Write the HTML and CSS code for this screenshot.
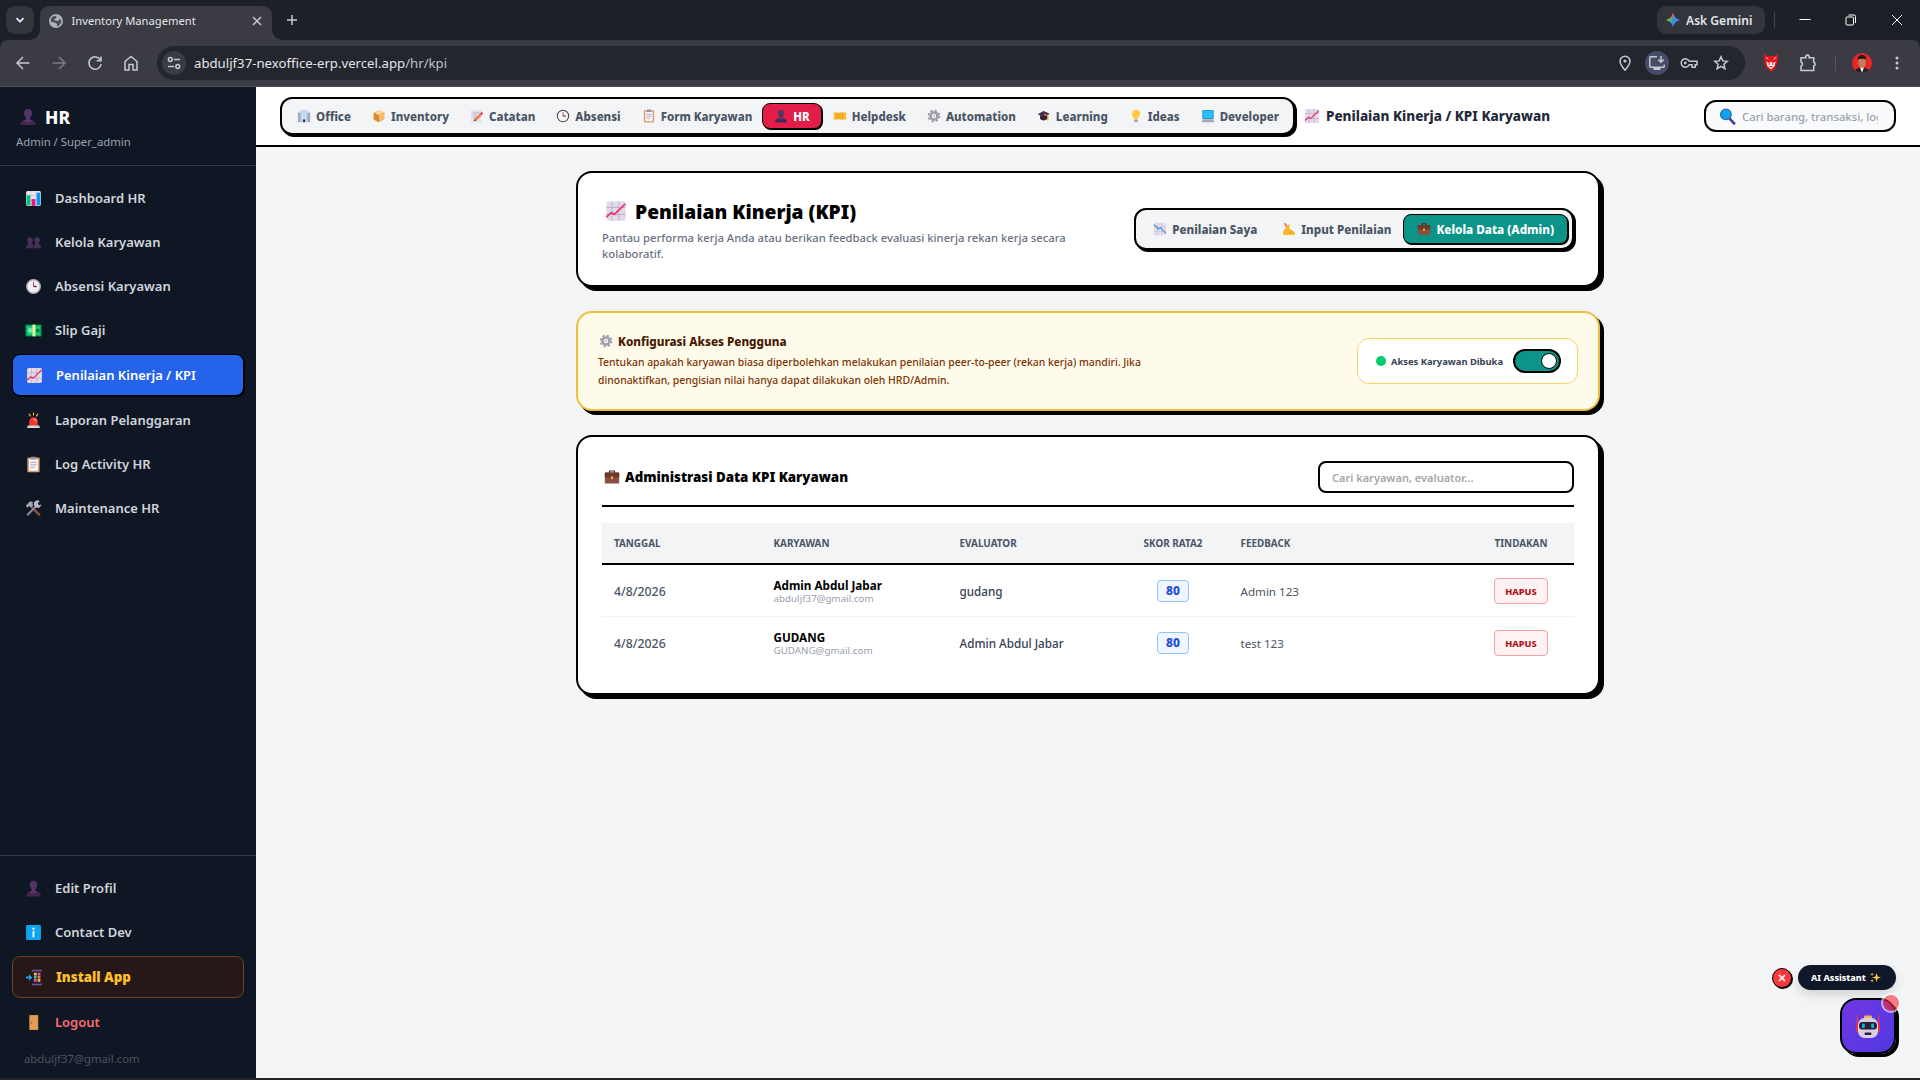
FILE: index.html
```
<!DOCTYPE html>
<html lang="id">
<head>
    <meta charset="UTF-8">
    <meta name="viewport" content="width=device-width, initial-scale=1.0">
    <title>Inventory Management</title>
    <link rel="stylesheet" href="styles.css">
</head>
<body>
    <!-- Icon sprite -->
    <svg class="sprite" aria-hidden="true">
        <symbol id="person" viewBox="0 0 16 16"><path d="M8 .8c2.3 0 3.7 1.7 3.5 4-.1 1.700-.8 3-1.700 3.800v1.600c2.600.8 4.700 2 4.900 5H1.300c.2-3 2.300-4.200 4.900-5V8.600C5.300 7.800 4.600 6.500 4.500 4.800 4.300 2.500 5.700.8 8 .8z" fill="#533566"/><path d="M1.300 15.200c.1-1.700.9-2.900 2.300-3.700L8 13l4.400-1.500c1.400.8 2.200 2 2.300 3.700z" fill="#43254f"/></symbol>
        <symbol id="people" viewBox="0 0 16 16"><path d="M4.700 3c1.700 0 2.600 1.100 2.600 2.800 0 1.200-.4 2.100-1 2.700v.8l1.700.7 1.700-.7v-.8c-.6-.6-1-1.500-1-2.700C8.700 4.100 9.600 3 11.300 3S14 4.100 14 5.800c0 1.200-.5 2.100-1.100 2.700v.8c1.200.6 2.100 1.500 2.100 4.200H1c0-2.700.9-3.600 2.100-4.200v-.8C2.500 7.900 2 7 2 5.800 2 4.100 3 3 4.700 3z" fill="#44305a"/><path d="M8 10v3.500" stroke="#241a35"/></symbol>
        <symbol id="bars" viewBox="0 0 16 16"><rect x="1" y="1" width="14" height="14" rx="1.500" fill="#e9e4ee"/><path d="M5.500 1v14M10.500 1v14M1 5h14M1 10h14" stroke="#c9c0d4" stroke-width=".6"/><rect x="1.500" y="5" width="3.600" height="9.500" fill="#00c37a"/><rect x="6.200" y="8.500" width="3.600" height="6.500" fill="#e6198c"/><rect x="10.900" y="2.500" width="3.600" height="12" fill="#0d9be8"/></symbol>
        <symbol id="up" viewBox="0 0 16 16"><rect x="1" y="1" width="14" height="14" rx="1.500" fill="#e2d9ea"/><path d="M5 1v14M10 1v14M1 5.500h14M1 10.500h14" stroke="#b9aac7" stroke-width=".6"/><path d="M1 12.500 4.500 9.200l2.200 1.300L14.800 2.800" fill="none" stroke="#e8386c" stroke-width="1.300"/></symbol>
        <symbol id="down" viewBox="0 0 16 16"><rect x="1" y="1" width="14" height="14" rx="1.500" fill="#e2dcec"/><path d="M5 1v14M10 1v14M1 5.500h14M1 10.500h14" stroke="#bdb2cc" stroke-width=".6"/><path d="M1 3l5 5 2.500-1.500 6.300 6.500" fill="none" stroke="#3d8fdb" stroke-width="1.300"/></symbol>
        <symbol id="clock" viewBox="0 0 16 16"><circle cx="8" cy="8" r="6.300" fill="#f4f1f5" stroke="#b5adb9" stroke-width="1.400"/><path d="M8 3.500V8" stroke="#d3365f" stroke-width="1"/><path d="M8 8h3" stroke="#3b2f40" stroke-width="1.300"/></symbol>
        <symbol id="clock2" viewBox="0 0 16 16"><circle cx="8" cy="8" r="6.500" fill="#f6f4f7" stroke="#4b4650" stroke-width="1.200"/><path d="M8 3.500V8" stroke="#c14260" stroke-width="1"/><path d="M8 8h3.200" stroke="#3b2f40" stroke-width="1.200"/></symbol>
        <symbol id="money" viewBox="0 0 16 16"><rect x=".5" y="2.500" width="15" height="11" fill="#00a352"/><rect x="1.800" y="3.800" width="12.400" height="8.400" fill="#19c979"/><circle cx="5" cy="8" r="2.300" fill="#7aeab4"/><circle cx="12" cy="8" r="2" fill="#087d45"/><rect x="7" y="2.500" width="2.800" height="11" fill="#e9f29a"/></symbol>
        <symbol id="siren" viewBox="0 0 16 16"><path d="M8 .5v2.700M3.800 1.600l1.500 2.500M12.200 1.600l-1.500 2.500" stroke="#ffc933" stroke-width="1"/><path d="M4 13V9a4 4 0 0 1 8 0v4z" fill="#f5372f"/><path d="M8 6.500a2.500 2.500 0 0 1 2.500 2.500" stroke="#ff9d93" fill="none"/><path d="M2 15l.6-2.300h10.800L14 15z" fill="#d9d5df"/></symbol>
        <symbol id="clip" viewBox="0 0 16 16"><rect x="2.200" y="1.300" width="11.600" height="14" rx="1" fill="#d99a66"/><rect x="3.700" y="3" width="8.600" height="11" fill="#f7f4fb"/><rect x="5.500" y=".7" width="5" height="2.600" rx=".6" fill="#9a93a6"/><path d="M5 6h6M5 8.300h6M5 10.600h4" stroke="#a79fbd" stroke-width=".9"/></symbol>
        <symbol id="tools" viewBox="0 0 16 16"><path d="M14 14.500 6.200 6.700" stroke="#8b5340" stroke-width="2.200"/><path d="M.8 5.300 4.800 1.200l3 1-1 1.300 1 1.500-2.200 2.200-1.800-1.500-1.500 1.500z" fill="#a9a4b2"/><path d="M2 14.300 10.800 5.500" stroke="#8d8797" stroke-width="2"/><path d="M13.700.9a3.500 3.500 0 1 0 1.600 3.300l-2 .7-1.300-1.300z" fill="#bdb8c7"/></symbol>
        <symbol id="info" viewBox="0 0 16 16"><rect x="1" y="1" width="14" height="14" rx="1.200" fill="#0da4f0"/><circle cx="8" cy="4.400" r="1.100" fill="#fff"/><path d="M8 6.500v6" stroke="#fff" stroke-width="1.700"/></symbol>
        <symbol id="install" viewBox="0 0 16 16"><path d="M5.500 2.300V.8H15v1.500zM5.500 15.200v-1.500H15v1.500z" fill="#6d589b"/><rect x="6.500" y="2.300" width="7.500" height="11.400" fill="#2b2140"/><path d="M0 7h2.800V5L6 8 2.800 11V9H0z" fill="#1aa4ec"/><path d="M7.500 3.500H10V6H7.500zM11 9.500h2.500V12H11z" fill="#f5b83d"/><path d="M11 3.500h2.500V6H11zM7.500 9.500H10V12H7.500z" fill="#e9559c"/><path d="M7.500 6.500H10V9H7.500z" fill="#44c98e"/><path d="M11 6.500h2.500V9H11z" fill="#f27f3d"/></symbol>
        <symbol id="door" viewBox="0 0 16 16"><rect x="4" y="1" width="8.500" height="14" rx=".6" fill="#d98d49"/><rect x="5" y="2" width="6.500" height="12" fill="#e29c58"/><circle cx="6.300" cy="8.300" r=".7" fill="#8a4f24"/></symbol>
        <symbol id="office" viewBox="0 0 16 16"><rect x="1" y="4" width="14" height="11" fill="#a3a9b5"/><rect x="4" y="1" width="8" height="14" fill="#b9d5ef"/><path d="M6.500 1v11M9.500 1v11" stroke="#dbe9f6" stroke-width=".8"/><rect x="7" y="12" width="2.200" height="3" fill="#2e2a35"/></symbol>
        <symbol id="box" viewBox="0 0 16 16"><path d="M2 4.200 8.500 1.500 14 4v7.500L8 15l-6-3z" fill="#f0a648"/><path d="M8 7l6-3v7.500L8 15z" fill="#f7bb68"/><path d="M2 4.200 8.500 1.500 14 4 8 7z" fill="#fbc878"/><path d="M2 4.200 8 7v8l-6-3z" fill="#d98a35"/><path d="M4.800 5.500 11 2.700" stroke="#fff0c9" stroke-width="1.300"/></symbol>
        <symbol id="memo" viewBox="0 0 16 16"><rect x="1" y="1" width="12" height="14" rx=".8" fill="#e6e2ee"/><path d="M3 4.500h8M3 7h5M3 9.500h4" stroke="#b5aec6" stroke-width=".9"/><path d="M6.300 12.300 13 5.600" stroke="#f2803d" stroke-width="3"/><path d="M4.300 14l1-3 2 2z" fill="#4b4655"/><path d="M12.400 4.200 14.200 6" stroke="#e13f6e" stroke-width="2.600"/></symbol>
        <symbol id="ticket" viewBox="0 0 16 16"><path d="M.7 4h14.600v2.700a1.500 1.500 0 0 0 0 2.600V12H.7V9.300a1.500 1.500 0 0 0 0-2.600z" fill="#fdb92e"/><path d="M10.500 4v8" stroke="#df7c1a" stroke-dasharray="1.300 1"/><path d="M3 6.500h5.500M3 9.200h5.500" stroke="#e88d1d"/></symbol>
        <symbol id="gear" viewBox="0 0 16 16"><circle cx="8" cy="8" r="4" fill="none" stroke="#a29cab" stroke-width="3"/><circle cx="8" cy="8" r="6.200" fill="none" stroke="#a29cab" stroke-width="2.200" stroke-dasharray="2.600 2.270"/><circle cx="8" cy="8" r="1.300" fill="#c9c4d0"/></symbol>
        <symbol id="cap" viewBox="0 0 16 16"><path d="M3.500 7v4.500c2.500 2 6 2 8 0V7z" fill="#34233f"/><path d="M.8 6 7.500 2.200l7.200 3.300-6.700 4z" fill="#43304f"/><path d="M8 6 12.300 7.500v5.500" stroke="#f0923d" stroke-width="1.400" fill="none"/></symbol>
        <symbol id="bulb" viewBox="0 0 16 16"><path d="M8 .8a4.700 4.700 0 0 1 4.700 4.700c0 2.500-2 3.400-2.400 5.700H5.700C5.300 8.900 3.300 8 3.300 5.500A4.700 4.700 0 0 1 8 .8z" fill="#ffc83d"/><path d="M6.700 3a2.500 2.500 0 0 0-1.500 2.500" stroke="#fff0b8" fill="none"/><rect x="6" y="11.600" width="4" height="3.400" rx="1" fill="#a9a3b0"/></symbol>
        <symbol id="laptop" viewBox="0 0 16 16"><rect x="1.500" y="1" width="13" height="10.500" rx=".8" fill="#2390c9"/><rect x="2.500" y="2" width="11" height="8.500" fill="#29c0fb"/><path d="M.8 15l1-3.200h12.400l1 3.200z" fill="#aaa4b5"/></symbol>
        <symbol id="mag" viewBox="0 0 16 16"><path d="m9.500 9.500 4.700 5" stroke="#4b3f92" stroke-width="2.600" stroke-linecap="round"/><circle cx="6.500" cy="6" r="5" fill="#0da5f2" stroke="#3469ad" stroke-width="1.200"/></symbol>
        <symbol id="case" viewBox="0 0 16 16"><path d="M5.500 4V2h5v2" fill="none" stroke="#4a2c23" stroke-width="1.200"/><rect x=".8" y="3.500" width="14.400" height="11" rx=".8" fill="#8a5040"/><path d="M.8 4.300a.8.8 0 0 1 .8-.8h12.800a.8.8 0 0 1 .8.800V8L8 9.500.8 8z" fill="#6b3a2e"/><rect x="6.800" y="7.300" width="2.400" height="2.800" fill="#f0a02c"/></symbol>
        <symbol id="hand" viewBox="0 0 16 16"><path d="M3 1.500 8.500 9.500" stroke="#e8703a" stroke-width="2"/><path d="M1 14.800c0-4 1.200-6.500 3.500-8.300L7.300 3c.9-.8 2.200 0 1.700 1.200L7.800 7.200l6 3.800c1.600 1 1.500 3.800-.5 3.800z" fill="#ffb92e"/><path d="M9.500 9.500 13 12M7.500 11.500l4 2" stroke="#e58f16" stroke-width=".8"/></symbol>
        <symbol id="spark" viewBox="0 0 16 16"><path d="M9.500 1.500l1.600 4.900L16 8l-4.900 1.600L9.500 14.500 7.900 9.600 3 8l4.900-1.600zM3 .8l.7 1.900 1.900.7-1.900.7L3 6l-.7-1.900-1.900-.7 1.900-.7zM3 10l.7 1.900 1.900.7-1.900.7L3 15.200l-.7-1.900-1.900-.7 1.900-.7z" fill="#ffc83d"/></symbol>
        <symbol id="robot" viewBox="0 0 26 26"><path d="M2.200 2v17M23.800 2v17" stroke="#ef3b4a" stroke-width="1.200"/><rect x="1" y="10" width="3.500" height="9" rx="1" fill="#e42f4e"/><rect x="21.500" y="10" width="3.500" height="9" rx="1" fill="#e42f4e"/><rect x="9" y="2.500" width="8" height="5" rx="1" fill="#f4b25f"/><rect x="3" y="5" width="20" height="20" rx="6.500" fill="#d9cfe4"/><rect x="4" y="9" width="18" height="7.500" rx="3.500" fill="#28232f"/><rect x="7" y="10.500" width="2.800" height="4.500" rx="1" fill="#12b2ef"/><rect x="16.200" y="10.500" width="2.800" height="4.500" rx="1" fill="#12b2ef"/><rect x="9.500" y="19.500" width="7" height="2.500" rx="1.200" fill="#28232f"/></symbol>
    </svg>

    <!-- Browser -->
    <div class="browser">
        <div class="tab-strip">
            <div class="tab-search"><svg width="12" height="12" viewBox="0 0 12 12"><path d="M2.500 4.200 6 7.700l3.500-3.500"/></svg></div>
            <div class="tab">
                <svg class="globe" width="14" height="14" viewBox="0 0 14 14"><circle cx="7" cy="7" r="7" fill="#aeb1b8"/><path d="M2 4.500 4 2.200 7.500 2l-.5 2.200L4.800 5.500l2 1.300 2.500.2 1.200-1.800L12.300 6 12 9l-2.200 2.700L8 12.400V9.800L5.500 8.500 2 7.800z" fill="#4b4d56"/></svg>
                <span class="tab-title">Inventory Management</span>
                <svg class="tab-close" width="10" height="10" viewBox="0 0 10 10"><path d="M1 1l8 8M9 1 1 9"/></svg>
            </div>
            <svg class="new-tab" width="12" height="12" viewBox="0 0 12 12"><path d="M6 1v10M1 6h10"/></svg>
            <div class="gemini">
                <svg width="14" height="14" viewBox="0 0 14 14"><defs><linearGradient id="gem" x1="0" y1=".3" x2="1" y2=".6"><stop offset="0" stop-color="#f5c33b"/><stop offset=".35" stop-color="#4fae73"/><stop offset=".6" stop-color="#3f86f5"/><stop offset="1" stop-color="#4a8cf7"/></linearGradient></defs><path d="M7 0c.9 3.800 3.200 6.100 7 7-3.800.9-6.100 3.200-7 7-.9-3.800-3.200-6.100-7-7 3.800-.9 6.100-3.200 7-7z" fill="url(#gem)"/><path d="M7 0c.4 1.700 1 3 1.900 4.200L5.100 4.200C6 3 6.600 1.700 7 0z" fill="#ea5a4f"/></svg>
                <span>Ask Gemini</span>
            </div>
            <div class="strip-divider"></div>
            <div class="window-buttons">
                <svg width="12" height="12" viewBox="0 0 12 12"><path d="M.5 5.500h11"/></svg>
                <svg width="12" height="12" viewBox="0 0 12 12"><rect x="1" y="3" width="7.500" height="8" rx="1"/><path d="M3.500 1H9a1.500 1.500 0 0 1 1.500 1.500V9"/></svg>
                <svg width="12" height="12" viewBox="0 0 12 12"><path d="m1 1 10 10M11 1 1 11"/></svg>
            </div>
        </div>
        <div class="toolbar">
            <div class="nav-buttons">
                <svg width="16" height="16" viewBox="0 0 16 16"><path d="M14.500 8H2M8 2 2 8l6 6"/></svg>
                <svg class="disabled" width="16" height="16" viewBox="0 0 16 16"><path d="M1.500 8H14M8 2l6 6-6 6"/></svg>
                <svg width="16" height="16" viewBox="0 0 16 16"><path d="M13.600 5.200A6.200 6.200 0 1 0 14.200 9M14 1.500v4.300H9.700"/></svg>
                <svg width="16" height="16" viewBox="0 0 16 16"><path d="M2 6.500 8 1.500l6 5V15h-4V9.500H6V15H2z"/></svg>
            </div>
            <div class="omnibox">
                <div class="site-info"><svg width="14" height="14" viewBox="0 0 14 14"><circle cx="3.300" cy="3.500" r="1.900"/><path d="M7 3.500h6M1 10.500h6"/><circle cx="10.700" cy="10.500" r="1.900"/></svg></div>
                <span class="url">abduljf37-nexoffice-erp.vercel.app<span>/hr/kpi</span></span>
                <div class="omni-icons">
                    <svg width="16" height="16" viewBox="0 0 16 16"><path d="M8 15.200C5 11.600 3 9 3 6.200a5 5 0 0 1 10 0c0 2.800-2 5.400-5 9z"/><circle class="solid" cx="8" cy="6" r="1.600"/></svg>
                    <span class="install-mark"><svg width="18" height="16" viewBox="0 0 18 16"><path d="M9 1.800H2.800a1 1 0 0 0-1 1v8.400a1 1 0 0 0 1 1h12.400a1 1 0 0 0 1-1V9.500M13 1v6M10.300 4.600 13 7.300l2.700-2.700"/><path class="solid" d="M5.500 12.500h7V15h-7z"/></svg></span>
                    <svg class="key" width="18" height="16" viewBox="0 0 18 16"><path d="M9.200 6.200a4.200 4.200 0 1 0 0 3.600H12v2.400h3.200V9.800h1.800V6.200z"/><circle class="solid" cx="5.300" cy="8" r="1.400"/></svg>
                    <svg width="16" height="16" viewBox="0 0 16 16"><path d="m8 1.800 1.800 4.100 4.500.4-3.400 3 1 4.400L8 11.400l-3.900 2.300 1-4.400-3.400-3 4.500-.4z"/></svg>
                </div>
            </div>
            <div class="ext-icons">
                <svg width="14" height="18" viewBox="0 0 14 18"><path d="M0 0l3.500 2h7L14 0l-.5 9-2 4.500L7 18l-4.500-4.500-2-4.500z" fill="#e3141c"/><path d="M2.500 7.500 5 9l2-1.500L9 9l2.500-1.500-.8 4.500L7 15.500 3.300 12z" fill="#f7e3e1"/><path d="M2 3.300l2 2M12 3.300l-2 2" stroke="#fff"/><path d="M4.500 10h1.500M8 10h1.500M5.500 12.700h3" stroke="#b3141c"/></svg>
                <svg class="line" width="18" height="18" viewBox="0 0 16 16"><path d="M1.800 3.300h4.100a1.700 1.700 0 1 1 3.200 0h4v4a1.700 1.700 0 0 1 0 3.300v4H1.800v-3.800a2 2 0 0 0 0-3.700z"/></svg>
                <div class="bar-divider"></div>
                <svg class="avatar" width="20" height="20" viewBox="0 0 20 20"><circle cx="10" cy="10" r="10" fill="#ea2525"/><path d="M3.500 17.600c1-2.600 3-3.200 6.500-3.200s5.500.6 6.500 3.200A10 10 0 0 1 10 20a10 10 0 0 1-6.500-2.400z" fill="#26202a"/><path d="M8 14l2 6 2-6z" fill="#fff"/><path d="M6.300 6h7.400v5c0 2.200-1.700 4-3.700 4s-3.700-1.800-3.700-4z" fill="#c17d56"/><path d="M6 7.500C5.300 3.800 7 2 10 2s4.700 1.800 4 5.500L13 5.800H7z" fill="#201a1c"/></svg>
                <svg class="dots" width="4" height="14" viewBox="0 0 4 14"><circle cx="2" cy="2" r="1.500"/><circle cx="2" cy="7" r="1.500"/><circle cx="2" cy="12" r="1.500"/></svg>
            </div>
        </div>
    </div>

    <div class="app">
        <aside class="sidebar">
            <div class="brand">
                <h2><svg class="icon"><use href="#person"/></svg>HR</h2>
                <p>Admin / Super_admin</p>
            </div>
            <nav class="menu">
                <a class="menu-item"><svg class="icon"><use href="#bars"/></svg>Dashboard HR</a>
                <a class="menu-item"><svg class="icon"><use href="#people"/></svg>Kelola Karyawan</a>
                <a class="menu-item"><svg class="icon"><use href="#clock"/></svg>Absensi Karyawan</a>
                <a class="menu-item"><svg class="icon"><use href="#money"/></svg>Slip Gaji</a>
                <a class="menu-item active"><svg class="icon"><use href="#up"/></svg>Penilaian Kinerja / KPI</a>
                <a class="menu-item"><svg class="icon"><use href="#siren"/></svg>Laporan Pelanggaran</a>
                <a class="menu-item"><svg class="icon"><use href="#clip"/></svg>Log Activity HR</a>
                <a class="menu-item"><svg class="icon"><use href="#tools"/></svg>Maintenance HR</a>
            </nav>
            <div class="menu menu-bottom">
                <a class="menu-item"><svg class="icon"><use href="#person"/></svg>Edit Profil</a>
                <a class="menu-item"><svg class="icon"><use href="#info"/></svg>Contact Dev</a>
                <a class="menu-item install"><svg class="icon"><use href="#install"/></svg>Install App</a>
                <a class="menu-item logout"><svg class="icon"><use href="#door"/></svg>Logout</a>
                <p class="user-email">abduljf37@gmail.com</p>
            </div>
        </aside>

        <div class="content">
            <header class="topbar">
                <nav class="modules">
                    <a><svg class="icon"><use href="#office"/></svg>Office</a>
                    <a><svg class="icon"><use href="#box"/></svg>Inventory</a>
                    <a><svg class="icon"><use href="#memo"/></svg>Catatan</a>
                    <a><svg class="icon"><use href="#clock2"/></svg>Absensi</a>
                    <a><svg class="icon"><use href="#clip"/></svg>Form Karyawan</a>
                    <a class="active"><svg class="icon"><use href="#person"/></svg>HR</a>
                    <a><svg class="icon"><use href="#ticket"/></svg>Helpdesk</a>
                    <a><svg class="icon"><use href="#gear"/></svg>Automation</a>
                    <a><svg class="icon"><use href="#cap"/></svg>Learning</a>
                    <a><svg class="icon"><use href="#bulb"/></svg>Ideas</a>
                    <a><svg class="icon"><use href="#laptop"/></svg>Developer</a>
                </nav>
                <h1 class="crumb"><svg class="icon"><use href="#up"/></svg>Penilaian Kinerja / KPI Karyawan</h1>
                <div class="search"><svg class="icon"><use href="#mag"/></svg><input type="text" placeholder="Cari barang, transaksi, log..."></div>
            </header>

            <main class="page">
                <section class="card hero">
                    <div class="hero-text">
                        <h2><svg class="icon"><use href="#up"/></svg>Penilaian Kinerja (KPI)</h2>
                        <p>Pantau performa kerja Anda atau berikan feedback evaluasi kinerja rekan kerja secara kolaboratif.</p>
                    </div>
                    <div class="tabs">
                        <button><svg class="icon"><use href="#down"/></svg>Penilaian Saya</button>
                        <button><svg class="icon"><use href="#hand"/></svg>Input Penilaian</button>
                        <button class="active"><svg class="icon"><use href="#case"/></svg>Kelola Data (Admin)</button>
                    </div>
                </section>

                <section class="card config">
                    <div class="config-text">
                        <h3><svg class="icon"><use href="#gear"/></svg>Konfigurasi Akses Pengguna</h3>
                        <p>Tentukan apakah karyawan biasa diperbolehkan melakukan penilaian peer-to-peer (rekan kerja) mandiri. Jika dinonaktifkan, pengisian nilai hanya dapat dilakukan oleh HRD/Admin.</p>
                    </div>
                    <div class="access">
                        <i class="dot"></i>
                        <span>Akses Karyawan Dibuka</span>
                        <div class="toggle"><i></i></div>
                    </div>
                </section>

                <section class="card data">
                    <div class="data-head">
                        <h3><svg class="icon"><use href="#case"/></svg>Administrasi Data KPI Karyawan</h3>
                        <input type="text" placeholder="Cari karyawan, evaluator...">
                    </div>
                    <table>
                        <colgroup><col class="c-date"><col class="c-name"><col class="c-eval"><col class="c-score"><col class="c-feed"><col class="c-act"></colgroup>
                        <thead>
                            <tr><th>TANGGAL</th><th>KARYAWAN</th><th>EVALUATOR</th><th class="center">SKOR RATA2</th><th>FEEDBACK</th><th class="center">TINDAKAN</th></tr>
                        </thead>
                        <tbody>
                            <tr>
                                <td class="date">4/8/2026</td>
                                <td><b>Admin Abdul Jabar</b><small>abduljf37@gmail.com</small></td>
                                <td class="eval">gudang</td>
                                <td class="center"><span class="score">80</span></td>
                                <td>Admin 123</td>
                                <td class="center"><button class="delete">HAPUS</button></td>
                            </tr>
                            <tr>
                                <td class="date">4/8/2026</td>
                                <td><b>GUDANG</b><small>GUDANG@gmail.com</small></td>
                                <td class="eval">Admin Abdul Jabar</td>
                                <td class="center"><span class="score">80</span></td>
                                <td>test 123</td>
                                <td class="center"><button class="delete">HAPUS</button></td>
                            </tr>
                        </tbody>
                    </table>
                </section>
            </main>
        </div>
    </div>

    <!-- AI Assistant -->
    <div class="assistant">
        <div class="assistant-label">
            <button class="assistant-close"><svg width="8" height="8" viewBox="0 0 8 8"><path d="m1 1 6 6M7 1 1 7"/></svg></button>
            <span class="assistant-pill">AI Assistant<svg class="icon"><use href="#spark"/></svg></span>
        </div>
        <div class="assistant-btn"><svg class="icon"><use href="#robot"/></svg><i></i></div>
    </div>
</body>
</html>
```
FILE: styles.css
```
* {
    margin: 0;
    padding: 0;
    box-sizing: border-box;
}

body {
    width: 1920px;
    height: 1080px;
    overflow: hidden;
    display: flex;
    flex-direction: column;
    background: #222325;
    font-family: "Noto Sans", "Open Sans", sans-serif;
    color: #000;
}

.sprite {
    position: absolute;
    width: 0;
    height: 0;
}

.icon {
    display: block;
    flex: none;
}

button {
    font-family: inherit;
}

/* Browser */
.browser {
    height: 87px;
    flex: none;
    background: #1d2027;
    color: #e3e5ea;
}

.browser svg {
    display: block;
    fill: none;
    stroke: #c7c9d1;
    stroke-width: 1.5;
}

.browser svg .solid {
    fill: #c7c9d1;
    stroke: none;
}

.tab-strip {
    height: 40px;
    display: flex;
    align-items: center;
    padding-left: 6px;
}

.tab-search {
    width: 28px;
    height: 28px;
    border-radius: 9px;
    background: #33353d;
    display: grid;
    place-items: center;
}

.browser .tab-search svg {
    stroke: #e3e5ff;
    stroke-width: 1.8;
}

.tab {
    position: relative;
    width: 232px;
    height: 34px;
    margin: 6px 0 0 6px;
    border-radius: 9px 9px 0 0;
    background: #3a3b43;
    display: flex;
    align-items: center;
    padding: 0 10px 5px 9px;
}

.tab::before,
.tab::after {
    content: "";
    position: absolute;
    bottom: 0;
    width: 10px;
    height: 10px;
}

.tab::before {
    left: -10px;
    background: radial-gradient(circle at 0 0, transparent 9.5px, #3a3b43 10px);
}

.tab::after {
    right: -10px;
    background: radial-gradient(circle at 100% 0, transparent 9.5px, #3a3b43 10px);
}

.browser .globe {
    stroke: none;
}

.tab-title {
    flex: 1;
    margin-left: 8.5px;
    font-size: 11.2px;
}

.new-tab {
    margin-left: 14px;
}

.gemini {
    display: flex;
    align-items: center;
    gap: 6px;
    width: 108px;
    height: 28px;
    margin-left: auto;
    padding-left: 9px;
    border-radius: 9px;
    background: #33353d;
    font-size: 12.1px;
    font-weight: 600;
}

.browser .gemini svg {
    stroke: none;
}

.strip-divider {
    width: 1px;
    height: 16px;
    margin-left: 9px;
    background: #44464e;
}

.window-buttons {
    display: flex;
    gap: 34px;
    margin: 0 17px 0 24px;
}

.browser .window-buttons svg {
    stroke: #fff;
    stroke-width: 1;
}

.toolbar {
    height: 47px;
    display: flex;
    align-items: center;
    background: #3a3b43;
    border-radius: 8px 8px 0 0;
    border-bottom: 1px solid #4d4d55;
}

.nav-buttons {
    display: flex;
    gap: 20px;
    margin-left: 15px;
}

.nav-buttons .disabled {
    opacity: .45;
}

.omnibox {
    width: 1588px;
    height: 34px;
    margin-left: 18px;
    padding: 0 16px 0 5px;
    border-radius: 17px;
    background: #23262d;
    display: flex;
    align-items: center;
}

.site-info {
    width: 24px;
    height: 24px;
    border-radius: 50%;
    background: #3a3b43;
    display: grid;
    place-items: center;
}

.url {
    margin-left: 8px;
    font-size: 13.2px;
    line-height: 20px;
}

.url span {
    color: #bfc2c9;
}

.omni-icons {
    display: flex;
    align-items: center;
    gap: 12px;
    margin-left: auto;
}

.omni-icons .key {
    margin: 0 3px 0 -1px;
}

.install-mark {
    width: 24px;
    height: 24px;
    border-radius: 50%;
    background: #454b68;
    display: grid;
    place-items: center;
}

.ext-icons {
    display: flex;
    align-items: center;
    margin-left: 19px;
}

.browser .ext-icons svg {
    stroke-width: 1;
    stroke: none;
}

.browser .ext-icons .line {
    margin-left: 21px;
    stroke: #c7c9d1;
    stroke-width: 1.4;
}

.bar-divider {
    width: 1px;
    height: 16px;
    margin: 0 16px 0 18px;
    background: #55575f;
}

.browser .dots {
    margin-left: 23px;
    fill: #c7c9d1;
}

/* Layout */
.app {
    height: 991px;
    display: flex;
}

.sidebar {
    width: 256px;
    display: flex;
    flex-direction: column;
    background: #101724;
}

.content {
    flex: 1;
    background: #f3f4f6;
}

/* Sidebar */
.brand {
    height: 79px;
    padding: 15px 16px 0;
    border-bottom: 1px solid #333a47;
}

.brand h2 {
    display: flex;
    align-items: center;
    height: 30px;
    gap: 8px;
    padding-left: 3px;
    font-size: 17.5px;
    font-weight: 800;
    color: #fff;
}

.brand .icon {
    width: 18px;
    height: 18px;
}

.brand p {
    font-size: 11.3px;
    line-height: 20px;
    color: #99a1af;
}

.menu {
    display: flex;
    flex-direction: column;
    gap: 4px;
    padding: 12px;
}

.menu-item {
    display: flex;
    align-items: center;
    flex: none;
    gap: 13px;
    height: 40px;
    padding-left: 13px;
    font-size: 13px;
    font-weight: 600;
    color: #d1d5dc;
}

.menu-item .icon {
    width: 17px;
    height: 17px;
}

.menu-item.active {
    height: 42px;
    border: 1px solid #000;
    border-radius: 8px;
    background: #2563eb;
    box-shadow: 1px 1px 0 #000;
    color: #fff;
}

.menu-bottom {
    flex: none;
    margin-top: auto;
    height: 223px;
    padding-bottom: 0;
    border-top: 1px solid #333a47;
}

.menu-item.install {
    height: 42px;
    border: 1px solid #6b4614;
    border-radius: 8px;
    background: #261818;
    color: #fcc02a;
    font-size: 13.3px;
    font-weight: 900;
}

.menu-item.logout {
    color: #ff6b70;
}

.user-email {
    padding-left: 12px;
    font-size: 11.3px;
    line-height: 26px;
    color: #4a5361;
}

/* Topbar */
.topbar {
    height: 60px;
    display: flex;
    align-items: center;
    padding: 0 24px;
    background: #fff;
    border-bottom: 2px solid #000;
}

.modules {
    display: flex;
    padding: 4px;
    border: 2px solid #000;
    border-radius: 12px;
    background: #f3f4f6;
    box-shadow: 2px 2px 0 #000;
}

.modules a {
    display: flex;
    align-items: center;
    gap: 5px;
    height: 26px;
    padding: 0 10px 0 11px;
    font-size: 11.5px;
    font-weight: 800;
    color: #4a5565;
}

.modules .icon {
    width: 14px;
    height: 14px;
}

.modules a.active {
    padding-right: 11px;
    border: 1px solid #000;
    border-radius: 8px;
    background: #e11d48;
    box-shadow: 1px 1px 0 #000;
    color: #fff;
}

.crumb {
    display: flex;
    align-items: center;
    gap: 6px;
    margin-left: 9px;
    font-size: 13.5px;
    font-weight: 800;
    color: #1e2939;
}

.crumb .icon {
    width: 16px;
    height: 16px;
}

.search {
    display: flex;
    align-items: center;
    gap: 6px;
    width: 192px;
    height: 32px;
    margin-left: auto;
    padding: 0 16px 0 13px;
    border: 2px solid #000;
    border-radius: 12px;
    background: #f9fafb;
}

.search .icon {
    width: 17px;
    height: 17px;
}

.search input {
    width: 136px;
    border: 0;
    background: none;
    font: 500 11.3px "Noto Sans", sans-serif;
}

.search input::placeholder {
    color: #99a1af;
}

/* Cards */
.page {
    width: 1024px;
    margin: 24px auto 0;
    display: flex;
    flex-direction: column;
    gap: 24px;
}

.card {
    border: 2px solid #000;
    border-radius: 16px;
    background: #fff;
    box-shadow: 4px 4px 0 #000;
}

.hero {
    display: flex;
    align-items: center;
    justify-content: space-between;
    height: 116px;
    padding: 0 24px;
}

.hero-text {
    width: 490px;
}

.hero-text h2 {
    display: flex;
    align-items: center;
    gap: 8px;
    height: 30px;
    padding-left: 3px;
    font-size: 19.2px;
    font-weight: 900;
}

.hero-text .icon {
    width: 22px;
    height: 22px;
}

.hero-text p {
    margin-top: 4px;
    font-size: 11.25px;
    font-weight: 500;
    line-height: 16px;
    color: #6a7282;
}

.tabs {
    display: flex;
    padding: 4px;
    border: 2px solid #000;
    border-radius: 12px;
    background: #f3f4f6;
    box-shadow: 2px 2px 0 #000;
}

.tabs button {
    display: flex;
    align-items: center;
    gap: 5px;
    height: 30px;
    padding: 0 12px 0 13px;
    border: 0;
    background: none;
    font-size: 11.6px;
    font-weight: 800;
    color: #4a5565;
}

.tabs .icon {
    width: 14px;
    height: 14px;
}

.tabs button.active {
    padding: 0 13px;
    border: 1px solid #000;
    border-radius: 8px;
    background: #0d9488;
    box-shadow: 1px 1px 0 #000;
    font-size: 11.7px;
    color: #fff;
}

.config {
    display: flex;
    align-items: center;
    justify-content: space-between;
    height: 100px;
    padding: 0 20px;
    border-color: #efbf3c;
    background: #fffbeb;
}

.config-text {
    width: 576px;
}

.config-text h3 {
    display: flex;
    align-items: center;
    gap: 5px;
    height: 16px;
    padding-left: 1px;
    font-size: 11.7px;
    font-weight: 800;
    color: #461901;
}

.config-text .icon {
    width: 14px;
    height: 14px;
}

.config-text p {
    margin-top: 4px;
    font-size: 10.42px;
    font-weight: 500;
    line-height: 18px;
    color: #7b3306;
}

.access {
    display: flex;
    align-items: center;
    width: 221px;
    height: 46px;
    padding-left: 18px;
    border: 1px solid #f5d36b;
    border-radius: 12px;
    background: #fff;
}

.dot {
    width: 10px;
    height: 10px;
    border-radius: 50%;
    background: #00cc6d;
}

.access span {
    width: 112px;
    margin: 0 10px 0 5px;
    white-space: nowrap;
    font-size: 9.4px;
    font-weight: 700;
    color: #364153;
}

.toggle {
    display: flex;
    justify-content: flex-end;
    width: 48px;
    height: 24px;
    padding: 2px;
    border: 2px solid #000;
    border-radius: 12px;
    background: #0d9488;
}

.toggle i {
    width: 16px;
    height: 16px;
    border: 1px solid #000;
    border-radius: 50%;
    background: #fff;
}

/* Data table */
.data {
    height: 260px;
    padding: 24px;
}

.data-head {
    display: flex;
    align-items: center;
    justify-content: space-between;
    padding-bottom: 12px;
    border-bottom: 2px solid #000;
}

.data-head h3 {
    display: flex;
    align-items: center;
    gap: 5px;
    padding-left: 2px;
    font-size: 13.3px;
    font-weight: 900;
}

.data-head .icon {
    width: 16px;
    height: 16px;
}

.data-head input {
    width: 256px;
    height: 32px;
    padding: 0 12px;
    border: 2px solid #000;
    border-radius: 8px;
    font: 600 11px "Noto Sans", sans-serif;
}

.data-head input::placeholder {
    color: #a3a6aa;
}

table {
    width: 972px;
    margin-top: 16px;
    table-layout: fixed;
    border-collapse: separate;
    border-spacing: 0;
}

.c-date { width: 159.5px; }
.c-name { width: 186px; }
.c-eval { width: 170px; }
.c-score { width: 111px; }
.c-feed { width: 239.5px; }
.c-act { width: 106px; }

th {
    height: 42px;
    padding: 0 12px;
    border-bottom: 2px solid #000;
    background: #f3f4f6;
    text-align: left;
    font-size: 9.9px;
    font-weight: 700;
    color: #4a5565;
    white-space: nowrap;
}

td {
    height: 52px;
    padding: 1px 12px 0;
    border-bottom: 1px solid #f3f4f6;
    font-size: 11.6px;
    color: #4a5565;
}

tbody tr:last-child td {
    border-bottom: 0;
    padding-top: 0;
}

.center {
    text-align: center;
}

td.date {
    font-size: 12.3px;
    font-weight: 500;
}

td.eval {
    font-weight: 500;
    font-size: 11.7px;
    color: #364153;
}

td b,
td small {
    display: block;
}

td b {
    font-size: 11.7px;
    line-height: 14px;
    color: #000;
}

td small {
    font-size: 9.8px;
    line-height: 13px;
    color: #99a1af;
}

.score {
    display: inline-block;
    width: 32px;
    height: 22px;
    border: 1px solid #8ec5ff;
    border-radius: 4px;
    background: #eff6ff;
    font-size: 12px;
    font-weight: 800;
    line-height: 20px;
    color: #1d4ed8;
    vertical-align: middle;
}

.delete {
    width: 54px;
    height: 26px;
    border: 1px solid #fba0a4;
    border-radius: 4px;
    background: #fef2f2;
    font-size: 9.2px;
    font-weight: 800;
    color: #b01017;
    vertical-align: middle;
}

/* AI Assistant */
.assistant {
    position: absolute;
    right: 24px;
    bottom: 26px;
    display: flex;
    flex-direction: column;
    align-items: flex-end;
    gap: 8px;
}

.assistant-label {
    display: flex;
    align-items: center;
    gap: 6px;
}

.assistant-close {
    width: 20px;
    height: 20px;
    border: 1px solid #000;
    border-radius: 50%;
    background: #f9383f;
    box-shadow: 1px 1px 0 #000;
    display: grid;
    place-items: center;
}

.assistant-close path {
    stroke: #fff;
    stroke-width: 1.6;
}

.assistant-pill {
    display: flex;
    align-items: center;
    gap: 4px;
    width: 98px;
    height: 25px;
    padding-left: 13px;
    border-radius: 13px;
    background: #0f1728;
    box-shadow: 0 5px 10px rgba(0, 0, 0, .13);
    font-size: 9px;
    font-weight: 800;
    color: #fff;
}

.assistant-pill .icon {
    width: 11px;
    height: 11px;
}

.assistant-btn {
    position: relative;
    width: 56px;
    height: 56px;
    border: 2px solid #000;
    border-radius: 16px;
    background: linear-gradient(135deg, #7137e3, #4f38e0);
    box-shadow: 3px 3px 0 #000;
    display: grid;
    place-items: center;
}

.assistant-btn .icon {
    width: 26px;
    height: 26px;
}

.assistant-btn i {
    position: absolute;
    top: -7px;
    right: -7px;
    width: 20px;
    height: 20px;
    border: 2px solid #fff;
    border-radius: 50%;
    background: #fb2c36;
    opacity: .6;
}
```
